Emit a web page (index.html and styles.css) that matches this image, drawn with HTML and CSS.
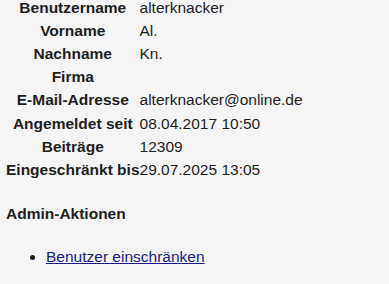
FILE: index.html
```html
<!DOCTYPE html>
<html lang="de">
<head>
<meta charset="utf-8">
<title>Benutzerprofil</title>
<link rel="stylesheet" href="styles.css">
</head>
<body>
<main class="page">
  <table class="profile">
    <tr><th>Benutzername</th><td>alterknacker</td></tr>
    <tr><th>Vorname</th><td>Al.</td></tr>
    <tr><th>Nachname</th><td>Kn.</td></tr>
    <tr><th>Firma</th><td></td></tr>
    <tr><th>E-Mail-Adresse</th><td>alterknacker@online.de</td></tr>
    <tr><th>Angemeldet seit</th><td>08.04.2017 10:50</td></tr>
    <tr><th>Beiträge</th><td>12309</td></tr>
    <tr><th>Eingeschränkt bis</th><td>29.07.2025 13:05</td></tr>
  </table>
  <h3 class="section-title">Admin-Aktionen</h3>
  <ul class="actions">
    <li><a href="#" class="action-link">Benutzer einschränken</a></li>
  </ul>
</main>
</body>
</html>
```
FILE: styles.css
```css
html, body {
  margin: 0;
  padding: 0;
  background: #f5f5f5;
}
body {
  font-family: "Liberation Sans", Arial, sans-serif;
  font-size: 15.5px;
  color: #1e1e1e;
  overflow: hidden;
}
.page {
  padding-left: 6px;
}
.profile {
  border-collapse: collapse;
  margin-top: -3.5px;
}
.profile tr {
  height: 23.1px;
}
.profile th {
  padding: 0;
  text-align: center;
  font-weight: bold;
  white-space: nowrap;
}
.profile td {
  padding: 0;
  white-space: nowrap;
}
.section-title {
  margin: 23.5px 0 0 0;
  font-size: 15.5px;
  font-weight: bold;
}
.actions {
  margin: 25.5px 0 0 0;
  padding-left: 40px;
}
.action-link {
  color: #1a1a8a;
}
```
